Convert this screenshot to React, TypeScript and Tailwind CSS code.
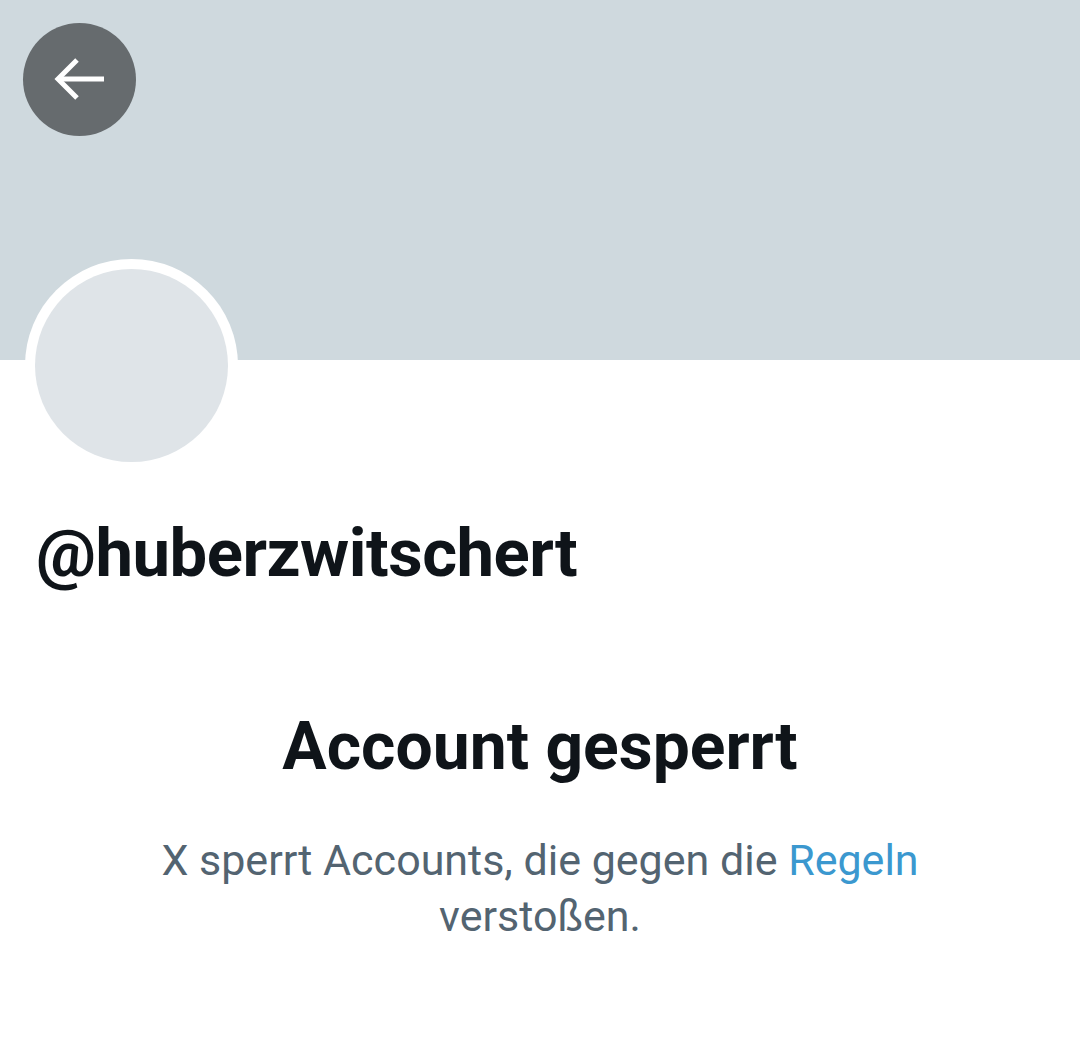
const FONT = 'font-["Roboto","Noto_Sans",sans-serif]'

function BackArrow() {
    return (
        <svg width="113" height="113" viewBox="0 0 113 113" fill="none" stroke="white" strokeWidth="5" strokeLinecap="butt" strokeLinejoin="miter">
            <path d="M35 56H81" />
            <path d="M54 37L35 56L54 75" />
        </svg>
    )
}

export default function App() {
    return (
        <div className={`w-[1080px] h-[1058px] bg-white overflow-hidden ${FONT}`}>
            {/* Banner */}
            <div className="h-[360px] bg-[#cfd9de] pt-[23px] pl-[23px]">
                <button className="w-[113px] h-[113px] rounded-full bg-[#666b6e] flex items-center justify-center">
                    <BackArrow />
                </button>
            </div>

            {/* Avatar */}
            <div className="ml-[25px] -mt-[101px] w-[213px] h-[213px] rounded-full bg-white p-[10px]">
                <div className="w-full h-full rounded-full bg-[#dfe4e8]" />
            </div>

            {/* Handle */}
            <div className="pl-[36px] mt-[41px]">
                <h1 className="text-[67px] leading-[80px] font-bold text-[#0f1419] tracking-[-0.5px]">@huberzwitschert</h1>
            </div>

            {/* Suspended notice */}
            <div className="flex flex-col items-center text-center mt-[114px]">
                <h2 className="text-[66px] leading-[80px] font-bold text-[#0f1419]">Account gesperrt</h2>
                <p className="mt-[45px] text-[43px] leading-[56px] text-[#536471]">
                    X sperrt Accounts, die gegen die <span className="text-[#3b98cf]">Regeln</span>
                    <br />
                    verstoßen.
                </p>
            </div>
        </div>
    )
}
